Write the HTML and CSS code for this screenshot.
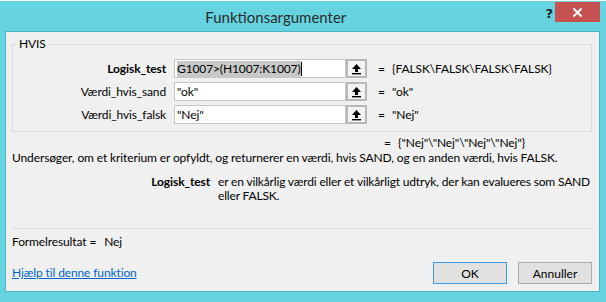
FILE: index.html
```html
<!DOCTYPE html>
<html>
<head>
  <title>Funktionsargumenter</title>
  <link rel="stylesheet" href="styles.css">
</head>
<body>
  <div class="sheet-strip"></div>
  <div class="window">
    <div class="titlebar">
      <div class="title">Funktionsargumenter</div>
      <div class="help">?</div>
      <div class="close">
        <svg width="11" height="11" viewBox="0 0 11 11"><path d="M1.5 1.5 L9.5 9.5 M9.5 1.5 L1.5 9.5" stroke="#fff" stroke-width="2"/></svg>
      </div>
    </div>

    <div class="client">
      <fieldset class="group">
        <legend>HVIS</legend>
        <div class="arg-row">
          <label class="arg-label bold">Logisk_test</label>
          <div class="arg-input"><span class="selected">G1007&gt;(H1007:K1007)</span><span class="caret"></span></div>
          <div class="ref-btn">
            <svg width="11" height="12" viewBox="0 0 11 12"><path d="M5.5 1 L10 6 L7 6 L7 9 L4 9 L4 6 L1 6 Z" fill="#000"/><rect x="1" y="10" width="9" height="1.4" fill="#000"/></svg>
          </div>
          <span class="eq">=</span>
          <span class="arg-value">{FALSK\FALSK\FALSK\FALSK}</span>
        </div>
        <div class="arg-row">
          <label class="arg-label">Værdi_hvis_sand</label>
          <div class="arg-input">"ok"</div>
          <div class="ref-btn">
            <svg width="11" height="12" viewBox="0 0 11 12"><path d="M5.5 1 L10 6 L7 6 L7 9 L4 9 L4 6 L1 6 Z" fill="#000"/><rect x="1" y="10" width="9" height="1.4" fill="#000"/></svg>
          </div>
          <span class="eq">=</span>
          <span class="arg-value">"ok"</span>
        </div>
        <div class="arg-row">
          <label class="arg-label">Værdi_hvis_falsk</label>
          <div class="arg-input">"Nej"</div>
          <div class="ref-btn">
            <svg width="11" height="12" viewBox="0 0 11 12"><path d="M5.5 1 L10 6 L7 6 L7 9 L4 9 L4 6 L1 6 Z" fill="#000"/><rect x="1" y="10" width="9" height="1.4" fill="#000"/></svg>
          </div>
          <span class="eq">=</span>
          <span class="arg-value">"Nej"</span>
        </div>
      </fieldset>

      <div class="result-row">
        <span class="eq">=</span>
        <span class="arg-value">{"Nej"\"Nej"\"Nej"\"Nej"}</span>
      </div>

      <p class="func-desc">Undersøger, om et kriterium er opfyldt, og returnerer en værdi, hvis SAND, og en anden værdi, hvis FALSK.</p>

      <div class="arg-desc">
        <span class="arg-desc-name">Logisk_test</span>
        <span class="arg-desc-text">er en vilkårlig værdi eller et vilkårligt udtryk, der kan evalueres som SAND eller FALSK.</span>
      </div>

      <div class="separator"></div>

      <div class="formula-result">
        <span>Formelresultat =</span>
        <span class="formula-value">Nej</span>
      </div>

      <div class="footer">
        <a class="help-link" href="#">Hjælp til denne funktion</a>
        <div class="buttons">
          <button class="btn btn-default">OK</button>
          <button class="btn">Annuller</button>
        </div>
      </div>
    </div>
  </div>
</body>
</html>
```

FILE: styles.css
```css
body {
  margin: 0;
  width: 606px;
  height: 302px;
  overflow: hidden;
  background-color: #ffffff;
  font-family: Lato, "Liberation Sans", sans-serif;
  font-size: 12px;
  letter-spacing: -0.12px;
  color: #000;
}
.sheet-strip {
  height: 1px;
  background-color: #f4f4f4;
}
.window {
  background-color: #65d3e0;
  height: 301px;
  display: flex;
  flex-direction: column;
}
.titlebar {
  height: 30px;
  display: flex;
  align-items: flex-start;
}
.title {
  flex: 1;
  text-align: center;
  font-size: 15px;
  letter-spacing: 0;
  line-height: 20px;
  margin-top: 6px;
  color: #2b2b2b;
  padding-left: 6px;
}
.help {
  font-family: "DejaVu Sans", sans-serif;
  font-weight: bold;
  font-size: 13px;
  color: #222;
  margin-top: 5px;
  margin-right: 2px;
}
.close {
  width: 45px;
  height: 20px;
  margin-top: 1px;
  margin-right: 6px;
  background-color: #c75050;
  display: flex;
  align-items: center;
  justify-content: center;
}
.client {
  margin: 0 6px 0 5px;
  height: 261px;
  box-sizing: border-box;
  background-color: #f0f0f0;
  border: 1px solid #4fb5c4;
  padding: 0 6px;
  display: flex;
  flex-direction: column;
}
.group {
  margin: 5px 1px 0 0;
  padding: 8px 0 7px 0;
  border: 1px solid #dcdcdc;
  display: flex;
  flex-direction: column;
  gap: 4px;
}
.group legend {
  margin-left: 4px;
  padding: 0 2px;
  line-height: 14px;
}
.arg-row {
  display: flex;
  align-items: center;
  height: 19px;
}
.arg-label {
  width: 153px;
  text-align: right;
  padding-right: 8px;
  line-height: 14px;
}
.bold {
  font-weight: bold;
}
.arg-input {
  width: 168px;
  height: 17px;
  background: #fff;
  border: 1px solid #c6c6c6;
  display: flex;
  align-items: center;
  padding-left: 2px;
  white-space: nowrap;
  overflow: hidden;
  line-height: 14px;
}
.selected {
  background-color: #c8c8c8;
  padding: 1px 0;
}
.caret {
  width: 1px;
  height: 14px;
  background: #000;
}
.ref-btn {
  width: 17px;
  height: 15px;
  border: 2px solid #b7b7b7;
  background: #f3f3f3;
  display: flex;
  align-items: center;
  justify-content: center;
}
.eq {
  width: 14px;
  margin-left: 11px;
  line-height: 14px;
}
.arg-value {
  line-height: 14px;
}
.result-row {
  display: flex;
  margin-top: 4px;
  padding-left: 361px;
  line-height: 14px;
}
.func-desc {
  margin: 1px 0 0 0;
  line-height: 14px;
}
.arg-desc {
  display: flex;
  margin-top: 10px;
  line-height: 14px;
}
.arg-desc-name {
  font-weight: bold;
  width: 198px;
  text-align: right;
  flex-shrink: 0;
}
.arg-desc-text {
  margin-left: 8px;
  width: 378px;
  flex-shrink: 0;
  letter-spacing: -0.16px;
}
.separator {
  height: 1px;
  background: #dcdcdc;
  margin-top: 25px;
}
.formula-result {
  display: flex;
  margin-top: 6px;
  line-height: 14px;
}
.formula-value {
  margin-left: 8px;
}
.footer {
  display: flex;
  justify-content: space-between;
  align-items: center;
  margin-top: 13px;
}
.help-link {
  color: #0066cc;
  line-height: 14px;
}
.buttons {
  display: flex;
  gap: 11px;
  margin-right: 1px;
}
.btn {
  width: 74px;
  height: 22px;
  font-family: Lato, "Liberation Sans", sans-serif;
  font-size: 12px;
  background: #e1e1e1;
  border: 1px solid #adadad;
  color: #000;
  padding: 0;
}
.btn-default {
  border-color: #3c9be6;
}
```
